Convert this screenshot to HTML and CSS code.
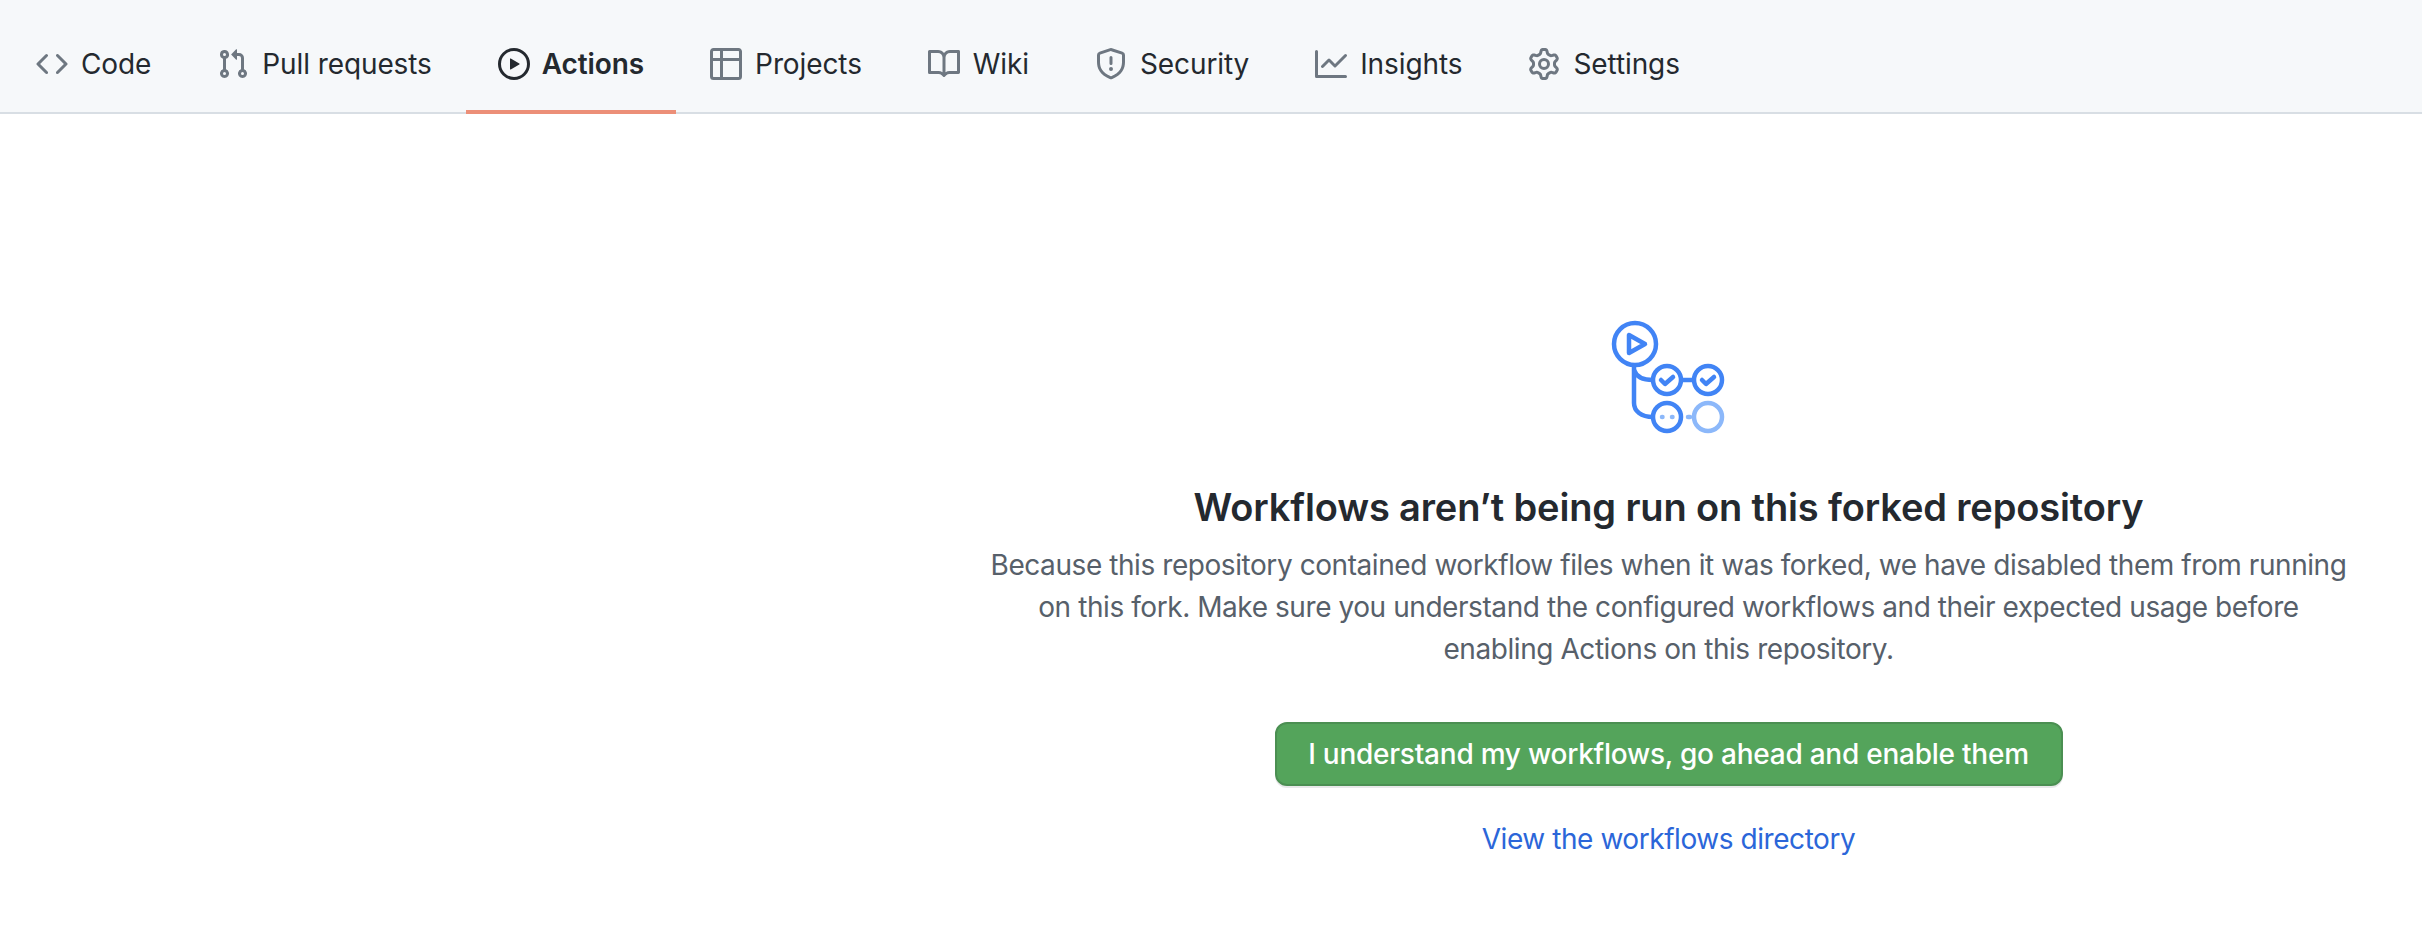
FILE: index.html
```html
<!DOCTYPE html>
<html>
	<head>
		<meta charset="UTF-8">
		<title>Actions</title>
		<link rel="stylesheet" href="styles.css">
	</head>
	<body>
		<nav class="tabs">
			<a class="tab" href="#">
				<svg class="tab-icon" viewBox="0 0 16 16"><path d="m11.28 3.22 4.25 4.25a.75.75 0 0 1 0 1.06l-4.25 4.25a.749.749 0 0 1-1.275-.326.749.749 0 0 1 .215-.734L13.94 8l-3.72-3.72a.749.749 0 0 1 .326-1.275.749.749 0 0 1 .734.215Zm-6.56 0a.751.751 0 0 1 1.042.018.751.751 0 0 1 .018 1.042L2.06 8l3.72 3.72a.749.749 0 0 1-.326 1.275.749.749 0 0 1-.734-.215L.47 8.53a.75.75 0 0 1 0-1.06Z"/></svg>
				Code
			</a>
			<a class="tab" href="#">
				<svg class="tab-icon" viewBox="0 0 16 16"><path d="M1.5 3.25a2.25 2.25 0 1 1 3 2.122v5.256a2.251 2.251 0 1 1-1.5 0V5.372A2.25 2.25 0 0 1 1.5 3.25Zm5.677-.177L9.573.677A.25.25 0 0 1 10 .854V2.5h1A2.5 2.5 0 0 1 13.5 5v5.628a2.251 2.251 0 1 1-1.5 0V5a1 1 0 0 0-1-1h-1v1.646a.25.25 0 0 1-.427.177L7.177 3.427a.25.25 0 0 1 0-.354ZM3.75 2.5a.75.75 0 1 0 0 1.5.75.75 0 0 0 0-1.5Zm0 9.5a.75.75 0 1 0 0 1.5.75.75 0 0 0 0-1.5Zm8.25.75a.75.75 0 1 0 1.5 0 .75.75 0 0 0-1.5 0Z"/></svg>
				Pull requests
			</a>
			<a class="tab tab-active" href="#">
				<svg class="tab-icon" viewBox="0 0 16 16"><path d="M8 0a8 8 0 1 1 0 16A8 8 0 0 1 8 0ZM1.5 8a6.5 6.5 0 1 0 13 0 6.5 6.5 0 0 0-13 0Zm4.879-2.773 4.264 2.559a.25.25 0 0 1 0 .428l-4.264 2.559A.25.25 0 0 1 6 10.559V5.442a.25.25 0 0 1 .379-.215Z"/></svg>
				Actions
			</a>
			<a class="tab" href="#">
				<svg class="tab-icon" viewBox="0 0 16 16"><path d="M0 1.75C0 .784.784 0 1.75 0h12.5C15.216 0 16 .784 16 1.75v12.5A1.75 1.75 0 0 1 14.25 16H1.75A1.75 1.75 0 0 1 0 14.25ZM6.5 6.5v8h7.75a.25.25 0 0 0 .25-.25V6.5Zm8-1.5V1.75a.25.25 0 0 0-.25-.25H6.5V5Zm-13 1.5v7.75c0 .138.112.25.25.25H5v-8ZM5 5V1.5H1.75a.25.25 0 0 0-.25.25V5Z"/></svg>
				Projects
			</a>
			<a class="tab" href="#">
				<svg class="tab-icon" viewBox="0 0 16 16"><path d="M0 1.75A.75.75 0 0 1 .75 1h4.253c1.227 0 2.317.59 3 1.501A3.743 3.743 0 0 1 11.006 1h4.245a.75.75 0 0 1 .75.75v10.5a.75.75 0 0 1-.75.75h-4.507a2.25 2.25 0 0 0-1.591.659l-.622.621a.75.75 0 0 1-1.06 0l-.622-.621A2.25 2.25 0 0 0 5.258 13H.75a.75.75 0 0 1-.75-.75Zm7.251 10.324.004-5.073-.002-2.253A2.25 2.25 0 0 0 5.003 2.5H1.5v9h3.757a3.75 3.75 0 0 1 1.994.574ZM8.755 4.75l-.004 7.322a3.752 3.752 0 0 1 1.992-.572H14.5v-9h-3.495a2.25 2.25 0 0 0-2.25 2.25Z"/></svg>
				Wiki
			</a>
			<a class="tab" href="#">
				<svg class="tab-icon" viewBox="0 0 16 16"><path d="M7.467.133a1.748 1.748 0 0 1 1.066 0l5.25 1.68A1.75 1.75 0 0 1 15 3.48V7c0 1.566-.32 3.182-1.303 4.682-.983 1.498-2.585 2.813-5.032 3.855a1.697 1.697 0 0 1-1.33 0c-2.447-1.042-4.049-2.357-5.032-3.855C1.32 10.182 1 8.566 1 7V3.48a1.75 1.75 0 0 1 1.217-1.667Zm.61 1.429a.25.25 0 0 0-.153 0l-5.25 1.68a.25.25 0 0 0-.174.238V7c0 1.358.275 2.666 1.057 3.86.784 1.194 2.121 2.34 4.366 3.297a.196.196 0 0 0 .154 0c2.245-.956 3.582-2.104 4.366-3.298C13.225 9.666 13.5 8.36 13.5 7V3.48a.251.251 0 0 0-.174-.237l-5.25-1.68ZM8.75 4.75v3a.75.75 0 0 1-1.5 0v-3a.75.75 0 0 1 1.5 0ZM9 10.5a1 1 0 1 1-2 0 1 1 0 0 1 2 0Z"/></svg>
				Security
			</a>
			<a class="tab" href="#">
				<svg class="tab-icon" viewBox="0 0 16 16"><path d="M1.5 1.75V13.5h13.75a.75.75 0 0 1 0 1.5H.75a.75.75 0 0 1-.75-.75V1.75a.75.75 0 0 1 1.5 0Zm14.28 2.53-5.25 5.25a.75.75 0 0 1-1.06 0L7 7.06 4.28 9.78a.751.751 0 0 1-1.042-.018.751.751 0 0 1-.018-1.042l3.25-3.25a.75.75 0 0 1 1.06 0L10 7.94l4.72-4.72a.751.751 0 0 1 1.042.018.751.751 0 0 1 .018 1.042Z"/></svg>
				Insights
			</a>
			<a class="tab" href="#">
				<svg class="tab-icon" viewBox="0 0 16 16"><path d="M8 0a8.2 8.2 0 0 1 .701.031C9.444.095 9.99.645 10.16 1.29l.288 1.107c.018.066.079.158.212.224.231.114.454.243.668.386.123.082.233.09.299.071l1.103-.303c.644-.176 1.392.021 1.82.63.27.385.506.792.704 1.218.315.675.111 1.422-.364 1.891l-.814.806c-.049.048-.098.147-.088.294.016.257.016.515 0 .772-.01.147.038.246.088.294l.814.806c.475.469.679 1.216.364 1.891a7.977 7.977 0 0 1-.704 1.217c-.428.61-1.176.807-1.82.63l-1.102-.302c-.067-.019-.177-.011-.3.071a5.909 5.909 0 0 1-.668.386c-.133.066-.194.158-.211.224l-.29 1.106c-.168.646-.715 1.196-1.458 1.26a8.006 8.006 0 0 1-1.402 0c-.743-.064-1.289-.614-1.458-1.26l-.289-1.106c-.018-.066-.079-.158-.212-.224a5.738 5.738 0 0 1-.668-.386c-.123-.082-.233-.09-.299-.071l-1.103.303c-.644.176-1.392-.021-1.82-.63a8.12 8.12 0 0 1-.704-1.218c-.315-.675-.111-1.422.363-1.891l.815-.806c.05-.048.098-.147.088-.294a6.214 6.214 0 0 1 0-.772c.01-.147-.038-.246-.088-.294l-.815-.806C.635 6.045.431 5.298.746 4.623a7.92 7.92 0 0 1 .704-1.217c.428-.61 1.176-.807 1.82-.63l1.102.302c.067.019.177.011.3-.071.214-.143.437-.272.668-.386.133-.066.194-.158.211-.224l.29-1.106C6.009.645 6.556.095 7.299.03 7.53.01 7.764 0 8 0Zm-.571 1.525c-.036.003-.108.036-.137.146l-.289 1.105c-.147.561-.549.967-.998 1.189-.173.086-.34.183-.5.29-.417.278-.97.423-1.529.27l-1.103-.303c-.109-.03-.175.016-.195.045-.22.312-.412.644-.573.99-.014.031-.021.11.059.19l.815.806c.411.406.562.957.53 1.456a4.709 4.709 0 0 0 0 .582c.032.499-.119 1.05-.53 1.456l-.815.806c-.081.08-.073.159-.059.19.162.346.353.677.573.989.02.03.085.076.195.046l1.102-.303c.56-.153 1.113-.008 1.53.27.161.107.328.204.501.29.447.222.85.629.997 1.189l.289 1.105c.029.109.101.143.137.146a6.6 6.6 0 0 0 1.142 0c.036-.003.108-.036.137-.146l.289-1.105c.147-.561.549-.967.998-1.189.173-.086.34-.183.5-.29.417-.278.97-.423 1.529-.27l1.103.303c.109.029.175-.016.195-.045.22-.313.411-.644.573-.99.014-.031.021-.11-.059-.19l-.815-.806c-.411-.406-.562-.957-.53-1.456a4.709 4.709 0 0 0 0-.582c-.032-.499.119-1.05.53-1.456l.815-.806c.081-.08.073-.159.059-.19a6.464 6.464 0 0 0-.573-.989c-.02-.03-.085-.076-.195-.046l-1.102.303c-.56.153-1.113.008-1.53-.27a4.44 4.44 0 0 0-.501-.29c-.447-.222-.85-.629-.997-1.189l-.289-1.105c-.029-.11-.101-.143-.137-.146a6.6 6.6 0 0 0-1.142 0ZM11 8a3 3 0 1 1-6 0 3 3 0 0 1 6 0ZM9.500 8a1.5 1.5 0 1 0-3.001.001A1.5 1.5 0 0 0 9.500 8Z"/></svg>
				Settings
			</a>
		</nav>
		<main class="blankslate">
			<svg class="flow" viewBox="-1 0 120 116" fill="none" stroke="#4184f5" stroke-width="4.5">
				<circle cx="25" cy="25" r="21"/>
				<path d="M19 16v18l16-9z" stroke-width="4.5" stroke-linejoin="round"/>
				<path d="M24 46v38c0 8 7 14 19 14"/>
				<path d="M24 51c2 6 8 10 19 10"/>
				<circle cx="57" cy="61" r="14"/>
				<path d="M71 61h13"/>
				<circle cx="98" cy="61" r="14"/>
				<circle cx="57" cy="98" r="14"/>
				<path d="M51 61l4 4 8-7M92 61l4 4 8-7" stroke-width="4.5" stroke-linecap="round" stroke-linejoin="round"/>
				<path d="M52 98h.5M62 98h.5" stroke-width="4.5" stroke-linecap="round" stroke="#8cb8fa"/>
				<circle cx="98" cy="98" r="14" stroke="#8cb8fa"/>
				<path d="M78 98h2" stroke="#8cb8fa" stroke-linecap="round"/>
			</svg>
			<h2 class="title">Workflows aren’t being run on this forked repository</h2>
			<p class="desc">Because this repository contained workflow files when it was forked, we have disabled them from running on this fork. Make sure you understand the configured workflows and their expected usage before enabling Actions on this repository.</p>
			<button class="enable-btn">I understand my workflows, go ahead and enable them</button>
			<a class="dir-link" href="#">View the workflows directory</a>
		</main>
	</body>
</html>
```
FILE: styles.css
```css
html, body {
	margin: 0;
	padding: 0;
	background: #fff;
	font-family: Inter, "Liberation Sans", sans-serif;
}
.tabs {
	display: flex;
	gap: 2px;
	height: 112px;
	padding-left: 4px;
	background: #f6f8fa;
	border-bottom: 2px solid #d8dee4;
}
.tab {
	display: flex;
	align-items: center;
	gap: 13px;
	height: 96px;
	padding: 16px 32px 0;
	font-size: 28px;
	letter-spacing: -0.1px;
	color: #24292f;
	text-decoration: none;
}
.tab-active {
	gap: 12px;
	font-weight: 600;
	box-shadow: inset 0 -2px 0 #ec8f78, 0 2px 0 #ec8f78;
}
.tab-icon {
	width: 32px;
	height: 32px;
	fill: #6e7781;
}
.tab-active .tab-icon {
	fill: #24292f;
}
.blankslate {
	display: flex;
	flex-direction: column;
	align-items: center;
	margin-left: 915px;
	padding-top: 205px;
	text-align: center;
}
.flow {
	width: 120px;
	height: 116px;
}
.title {
	margin: 42px 0 0;
	font-size: 38px;
	letter-spacing: -0.14px;
	line-height: 60px;
	font-weight: 600;
	color: #24292f;
}
.desc {
	width: 1370px;
	margin: 7px 0 0;
	font-size: 28px;
	letter-spacing: -0.43px;
	line-height: 42px;
	color: #57606a;
}
.enable-btn {
	width: 788px;
	height: 64px;
	margin-top: 52px;
	border: 2px solid #4b8f52;
	border-radius: 12px;
	background: #54a45b;
	box-shadow: 0 2px 0 rgba(27, 31, 36, 0.1);
	color: #fff;
	font-family: inherit;
	font-size: 28px;
	letter-spacing: -0.24px;
	font-weight: 500;
}
.dir-link {
	margin-top: 32px;
	font-size: 28px;
	letter-spacing: -0.44px;
	line-height: 42px;
	color: #2b66d9;
	text-decoration: none;
}
```
